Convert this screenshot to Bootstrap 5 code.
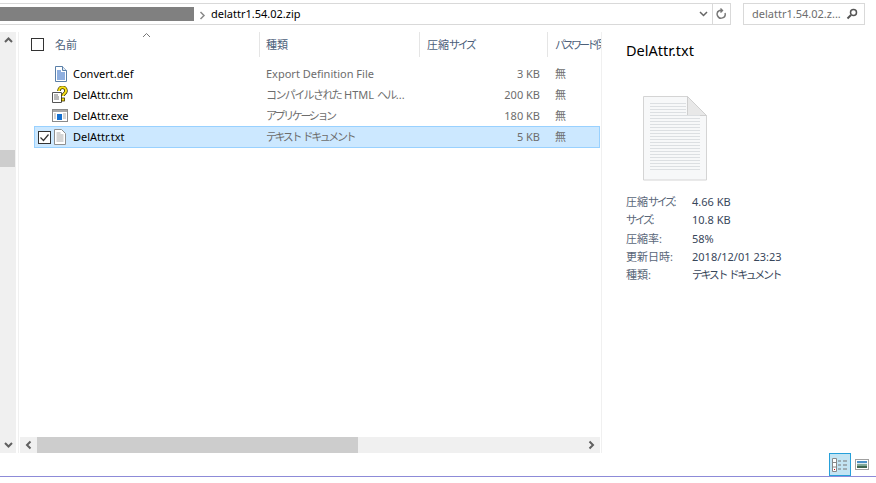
<!DOCTYPE html>
<html lang="ja">
  <head>
    <meta charset="UTF-8" />
    <title>delattr1.54.02.zip</title>
    <link rel="stylesheet" href="https://cdn.jsdelivr.net/npm/bootstrap@5.3.0/dist/css/bootstrap.min.css" />
    <style>
      html, body { background: #fff; }
      body {
        width: 876px; height: 483px; overflow: hidden;
        font-family: "Noto Sans", "Noto Sans CJK JP", sans-serif;
        font-size: 11px; line-height: 16px; color: #000;
      }
      .kana-tight { letter-spacing: -2.4px; word-spacing: 2px; }
      .kana-mid { letter-spacing: -1.6px; }
      .kana-narrow { letter-spacing: -3px; }
      .addr-row { height: 22px; margin-top: 3px; }
      .addr-box { width: 731px; border-top: 1px solid #d9d9d9; border-bottom: 1px solid #d9d9d9; border-right: 1px solid #d9d9d9; }
      .addr-mask { width: 194px; height: 14px; background: #808080; }
      .addr-sep { width: 17px; color: #777; }
      .addr-end { width: 18px; border-left: 1px solid #d9d9d9; }
      .search-box { width: 122px; margin-left: 12px; border: 1px solid #d9d9d9; color: #6d6d6d; padding-left: 8px; padding-right: 6px; }
      .main-row { height: 421px; margin-top: 7px; }
      .vscroll { width: 16px; background: #f0f0f0; margin-right: 2px; }
      .vthumb { height: 17px; margin-top: 102px; margin-right: 1px; background: #cdcdcd; }
      .file-pane { width: 584px; border-left: 1px solid #f0f0f0; border-right: 1px solid #f0f0f0; }
      .head-row { height: 25px; color: #4c607a; }
      .col-check { width: 36px; padding-left: 12px; }
      .col-name { width: 205px; }
      .col-type { width: 160px; padding-left: 6px; }
      .col-size { width: 128px; padding-left: 7px; }
      .col-pass { width: 53px; padding-left: 7px; white-space: nowrap; overflow: hidden; }
      .col-head { height: 25px; border-right: 1px solid #e5e5e5; }
      .sort-mark { left: 123px; top: 0; }
      .chk { width: 13px; height: 13px; border: 1px solid #333; background: #fff; }
      .rows { margin-top: 6px; margin-left: 15px; margin-right: 1px; }
      .file-row { height: 21px; color: #6d6d6d; border: 1px solid transparent; }
      .file-row.picked { height: 22px; background: #cce8ff; border-color: #99d1ff; }
      .row-check { width: 19px; padding-left: 3px; }
      .row-icon { width: 19px; }
      .icon-wide { width: 21px; margin-left: -2px; }
      .row-name { width: 193px; color: #000; }
      .row-type { width: 196px; white-space: nowrap; }
      .row-size { width: 78px; text-align: right; }
      .row-pass { padding-left: 15px; }
      .hscroll { height: 16px; background: #f0f0f0; margin-left: 1px; margin-right: 1px; }
      .harrow { width: 17px; }
      .hthumb { width: 321px; background: #cdcdcd; }
      .detail-pane { padding-left: 24px; }
      .detail-title { font-size: 14.5px; line-height: 20px; margin-top: 8px; color: #000; }
      .big-doc { margin: 36px 0 0 17px; }
      .props { margin-top: 12px; color: #38465a; line-height: 18.25px; }
      .prop-name { width: 66px; color: #5a6779; }
      .foot-row { height: 23px; padding-right: 3px; }
      .view-on { width: 22px; height: 23px; background: #c3e4f3; border: 1px solid #26a0da; }
      .view-off { width: 22px; height: 23px; }
      .foot-line { height: 1px; background: #8d8bd8; }
    </style>
  </head>
  <body>
    <div class="d-flex addr-row">
      <div class="addr-box d-flex align-items-center">
        <div class="addr-mask"></div>
        <div class="addr-sep text-center">
          <svg width="7" height="9" viewBox="0 0 7 9"><path d="M1.500 1l3.500 3.500l-3.500 3.500" fill="none" stroke="#8a8a8a" stroke-width="1.500"/></svg>
        </div>
        <div class="flex-grow-1">delattr1.54.02.zip</div>
        <div class="me-1">
          <svg class="d-block" width="9" height="6" viewBox="0 0 9 6"><path d="M1 1l3.500 3.500l3.500-3.500" fill="none" stroke="#666" stroke-width="1.500"/></svg>
        </div>
        <div class="addr-end d-flex align-items-center justify-content-center h-100">
          <svg width="11" height="12" viewBox="0 0 11 12"><path d="M9 5a4 4 0 1 1-5.500-2.500h3M4.500 .5l2 2l-2 2" fill="none" stroke="#777" stroke-width="1.400"/></svg>
        </div>
      </div>
      <div class="search-box d-flex align-items-center justify-content-between">
        <span>delattr1.54.02.z...</span>
        <svg width="12" height="12" viewBox="0 0 12 12"><circle cx="7.500" cy="4.500" r="3" fill="none" stroke="#555" stroke-width="1.500"/><path d="M5 7l-3.500 3.500" stroke="#555" stroke-width="2"/></svg>
      </div>
    </div>

    <div class="d-flex main-row">
      <div class="vscroll d-flex flex-column">
        <div class="text-center">
          <svg class="d-block mx-auto" width="9" height="16" viewBox="0 0 9 16"><path d="M1 10l3.500-3.500l3.500 3.500" fill="none" stroke="#606060" stroke-width="2"/></svg>
        </div>
        <div class="vthumb"></div>
        <div class="mt-auto text-center">
          <svg class="d-block mx-auto" width="9" height="16" viewBox="0 0 9 16"><path d="M1 6l3.500 3.500l3.500-3.500" fill="none" stroke="#606060" stroke-width="2"/></svg>
        </div>
      </div>

      <div class="file-pane d-flex flex-column">
        <div class="head-row d-flex position-relative">
          <div class="col-check d-flex align-items-center"><div class="chk"></div></div>
          <div class="col-name col-head d-flex align-items-center">名前</div>
          <div class="col-type col-head d-flex align-items-center">種類</div>
          <div class="col-size col-head d-flex align-items-center"><span>圧縮<span class="kana-tight">サイズ</span></span></div>
          <div class="col-pass d-flex align-items-center"><span class="kana-narrow">パスワード保護</span></div>
          <svg class="sort-mark position-absolute" width="9" height="6" viewBox="0 0 9 6"><path d="M1 5l3.500-3.500l3.500 3.500" fill="none" stroke="#777"/></svg>
        </div>

        <div class="rows flex-grow-1">
          <div class="file-row d-flex align-items-center">
            <div class="row-check"></div>
            <div class="row-icon">
              <svg class="d-block" width="14" height="16" viewBox="0 0 14 16"><path d="M1.500 .5h7l4 4v11h-11z" fill="#fff" stroke="#5a7fa8"/><path d="M8.500 .5v4h4" fill="#dfe9f3" stroke="#5a7fa8"/><path d="M3 5h4M3 7h8M3 9h8M3 11h8M3 13h8" stroke="#1f5fbf"/></svg>
            </div>
            <div class="row-name">Convert.def</div>
            <div class="row-type">Export Definition File</div>
            <div class="row-size">3 KB</div>
            <div class="row-pass">無</div>
          </div>
          <div class="file-row d-flex align-items-center">
            <div class="row-check"></div>
            <div class="row-icon icon-wide">
              <svg class="d-block" width="16" height="17" viewBox="0 0 16 17"><path d="M.5 6.500h9v10h-9z" fill="#fff" stroke="#555"/><path d="M2 9h4M2 11h5M2 13h5" stroke="#777"/><path d="M7 5c0-5 7-5 7 0c0 2.500-3 2.500-3 5" fill="none" stroke="#3a3000" stroke-width="3.500"/><path d="M7 5c0-5 7-5 7 0c0 2.500-3 2.500-3 5" fill="none" stroke="#f7e018" stroke-width="2"/><rect x="9.500" y="12" width="3" height="3" fill="#f7e018" stroke="#3a3000" stroke-width=".8"/></svg>
            </div>
            <div class="row-name">DelAttr.chm</div>
            <div class="row-type"><span class="kana-mid">コンパイルされた</span> HTML <span class="kana-mid">ヘル</span>...</div>
            <div class="row-size">200 KB</div>
            <div class="row-pass">無</div>
          </div>
          <div class="file-row d-flex align-items-center">
            <div class="row-check"></div>
            <div class="row-icon icon-wide">
              <svg class="d-block" width="16" height="13" viewBox="0 0 16 13"><rect x=".5" y=".5" width="15" height="12" fill="#fff" stroke="#8a8a8a"/><rect x="1" y="1" width="14" height="2" fill="#a8a8a8"/><rect x="5" y="5" width="5" height="6" fill="#1470d0"/><path d="M11 5h3M11 7h3M11 9h3M2 5h2M2 7h2M2 9h2" stroke="#aaa"/></svg>
            </div>
            <div class="row-name">DelAttr.exe</div>
            <div class="row-type"><span class="kana-tight">アプリケーション</span></div>
            <div class="row-size">180 KB</div>
            <div class="row-pass">無</div>
          </div>
          <div class="file-row picked d-flex align-items-center">
            <div class="row-check">
              <svg class="d-block" width="13" height="13" viewBox="0 0 13 13"><rect x=".5" y=".5" width="12" height="12" fill="#fff" stroke="#333"/><path d="M2.500 6.500l3 3l5-6" fill="none" stroke="#333" stroke-width="1.200"/></svg>
            </div>
            <div class="row-icon">
              <svg class="d-block" width="12" height="16" viewBox="0 0 12 16"><path d="M.5 .5h7l4 4v11h-11z" fill="#fff" stroke="#8f8f8f"/><path d="M2.500 4h4M2.500 6h7M2.500 8h7M2.500 10h7M2.500 12h7" stroke="#aaa"/></svg>
            </div>
            <div class="row-name">DelAttr.txt</div>
            <div class="row-type"><span class="kana-tight">テキスト ドキュメント</span></div>
            <div class="row-size">5 KB</div>
            <div class="row-pass">無</div>
          </div>
        </div>

        <div class="hscroll d-flex">
          <div class="harrow text-center">
            <svg class="d-block mx-auto" width="7" height="16" viewBox="0 0 7 16"><path d="M5.500 4.500l-3.500 3.500l3.500 3.500" fill="none" stroke="#606060" stroke-width="2"/></svg>
          </div>
          <div class="hthumb"></div>
          <div class="harrow text-center ms-auto">
            <svg class="d-block mx-auto" width="7" height="16" viewBox="0 0 7 16"><path d="M1.500 4.500l3.500 3.500l-3.500 3.500" fill="none" stroke="#606060" stroke-width="2"/></svg>
          </div>
        </div>
      </div>

      <div class="detail-pane">
        <div class="detail-title">DelAttr.txt</div>
        <div class="big-doc">
          <svg class="d-block" width="64" height="85" viewBox="0 0 64 85">
            <path d="M.5 .5h44l19 19v64.500h-63z" fill="#f7f8f9" stroke="#d4d4d4"/>
            <path d="M44.500 .5v19h19z" fill="#e8e8e8" stroke="#cfcfcf"/>
            <path d="M7 7.500h36M7 10.500h36M7 13.500h36M7 16.500h36M7 19.500h50M7 22.500h50M7 25.500h50M7 28.500h50M7 31.500h50M7 34.500h50M7 37.500h50M7 40.500h50M7 43.500h50M7 46.500h50M7 49.500h50M7 52.500h50M7 55.500h50M7 58.500h50M7 61.500h50M7 64.500h50M7 67.500h50M7 70.500h50M7 73.500h50" stroke="#dcdfe2"/>
          </svg>
        </div>
        <div class="props">
          <div class="d-flex"><div class="prop-name">圧縮<span class="kana-tight">サイズ</span>:</div><div>4.66 KB</div></div>
          <div class="d-flex"><div class="prop-name"><span class="kana-tight">サイズ</span>:</div><div>10.8 KB</div></div>
          <div class="d-flex"><div class="prop-name">圧縮率:</div><div>58%</div></div>
          <div class="d-flex"><div class="prop-name">更新日時:</div><div>2018/12/01 23:23</div></div>
          <div class="d-flex"><div class="prop-name">種類:</div><div class="kana-tight">テキスト ドキュメント</div></div>
        </div>
      </div>
    </div>

    <div class="foot-row d-flex justify-content-end align-items-center">
      <div class="view-on d-flex align-items-center justify-content-center">
        <svg width="16" height="14" viewBox="0 0 16 14"><path d="M.5 .5h4v13h-4zM.5 4.500h4M.5 9h4" fill="#fff" stroke="#888"/><path d="M6 3h3M11 3h4M6 7h3M11 7h4M6 11h3M11 11h4" stroke="#777"/><rect x="2" y="11" width="1" height="1" fill="#c00"/></svg>
      </div>
      <div class="view-off d-flex align-items-center justify-content-center">
        <svg width="14" height="11" viewBox="0 0 14 11"><rect x=".5" y=".5" width="13" height="10" fill="#fff" stroke="#a0a0a0"/><rect x="2" y="2" width="10" height="2" fill="#4a90c8"/><rect x="2" y="4" width="10" height="1" fill="#dce9ee"/><rect x="2" y="5" width="10" height="2" fill="#7fa89a"/><rect x="2" y="7" width="10" height="2" fill="#3f6650"/></svg>
      </div>
    </div>
    <div class="foot-line"></div>
    <script src="https://cdn.jsdelivr.net/npm/bootstrap@5.3.0/dist/js/bootstrap.bundle.min.js"></script>
  </body>
</html>
